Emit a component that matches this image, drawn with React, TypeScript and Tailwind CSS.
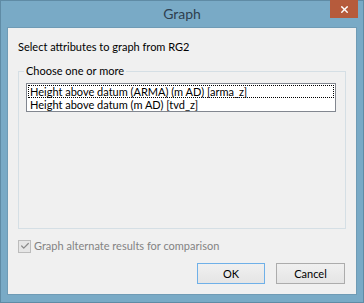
import { Check, X } from "lucide-react";

const items = [
    "Height above datum (ARMA) (m AD) [arma_z]",
    "Height above datum (m AD) [tvd_z]",
];

export default function App() {
    return (
        <div className="w-[364px] h-[303px] bg-[#79aac6] flex flex-col border border-[#5f8ba5] text-[11px] text-black font-['Lato',sans-serif]">
            {/* Title bar */}
            <div className="relative h-[26px] flex items-center justify-center">
                <span className="text-[14px] text-[#2e3f4f] -mt-[2px]">Graph</span>
                <div className="absolute right-[5px] top-[-1px] w-[28px] h-[18px] bg-[#b65b3c] flex items-center justify-center">
                    <X size={11} strokeWidth={3} className="text-white" />
                </div>
            </div>

            {/* Client */}
            <div className="mx-[6px] h-[268px] bg-[#f0f0f0] border border-[#6f9bb5] flex flex-col">
                <div className="mt-[11px] ml-[10px] h-4 leading-4">Select attributes to graph from RG2</div>

                <fieldset className="mt-[8px] mx-[10px] h-[166px] border border-[#d5dfe5] pl-[7px] pr-[9px] pt-[4px] pb-[11px] flex flex-col">
                    <legend className="-ml-[2px] px-[2px] h-4 leading-4">Choose one or more</legend>
                    <div className="flex-1 bg-white border border-[#828790] pt-[1px] px-[1px]">
                        {items.map((t, i) => (
                            <div
                                key={t}
                                className={
                                    i === 0
                                        ? "h-[13px] leading-[11px] pl-[1px] border border-dotted border-black"
                                        : "h-[13px] leading-[13px] pl-[2px]"
                                }
                            >
                                {t}
                            </div>
                        ))}
                    </div>
                </fieldset>

                <div className="mt-[9px] ml-[10px] flex items-center gap-[3px] text-[#838383]">
                    <div className="w-[13px] h-[13px] border border-[#bcbcbc] bg-[#e6e6e6] flex items-center justify-center">
                        <Check size={10} strokeWidth={3} className="text-[#8b8b8b]" />
                    </div>
                    <span className="leading-4">Graph alternate results for comparison</span>
                </div>

                <div className="mt-[9px] mr-[11px] flex justify-end gap-[11px]">
                    <button className="w-[68px] h-[21px] border border-[#6fb0e8] bg-gradient-to-b from-[#f0f0f0] to-[#e5e5e5] leading-[19px]">
                        OK
                    </button>
                    <button className="w-[69px] h-[21px] border border-[#acacac] bg-gradient-to-b from-[#f0f0f0] to-[#e5e5e5] leading-[19px]">
                        Cancel
                    </button>
                </div>
            </div>
        </div>
    );
}
